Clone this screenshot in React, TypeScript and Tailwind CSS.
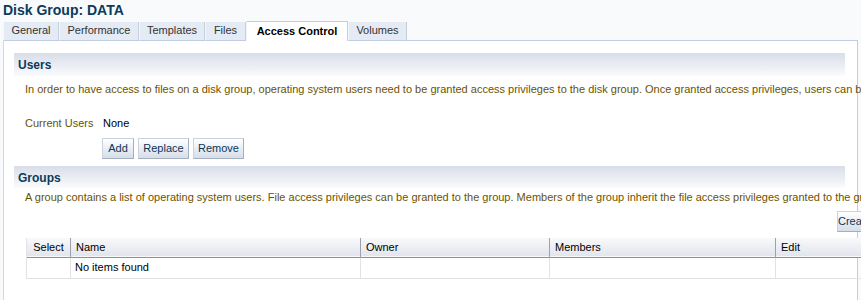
import React from 'react';

const tabs = [
    { name: 'General', w: 'w-[56px]' },
    { name: 'Performance', w: 'w-[80px]' },
    { name: 'Templates', w: 'w-[66px]' },
    { name: 'Files', w: 'w-[41px]' },
    { name: 'Access Control', w: 'w-[102px]', active: true },
    { name: 'Volumes', w: 'w-[59px]' },
];

const columns = [
    { name: 'Select', w: 'w-[44px]', center: true },
    { name: 'Name', w: 'w-[290px]' },
    { name: 'Owner', w: 'w-[189px]' },
    { name: 'Members', w: 'w-[226px]' },
    { name: 'Edit', w: 'w-[110px]' },
];

function Btn({ label, className = '' }: { label: string; className?: string }) {
    return (
        <button
            className={`h-[21px] px-0 text-center border border-[#a3afbf] border-t-[#c9d2de] border-l-[#c9d2de] bg-gradient-to-b from-white to-[#d6dee9] text-[11px] leading-[19px] text-[#0c3557] ${className}`}
        >
            {label}
        </button>
    );
}

function SectionBar({ title, h }: { title: string; h: string }) {
    return (
        <div className={`${h} w-[831px] bg-gradient-to-b from-[#d8dde8] to-[#fafbfd] pl-[4px] pt-[5px]`}>
            <h2 className="text-[12px] font-bold leading-[15px] text-[#0c3a5a]">{title}</h2>
        </div>
    );
}

export default function App() {
    return (
        <div className="w-[861px] h-[300px] overflow-hidden bg-[#f9fafc] font-['Liberation_Sans',Arial,sans-serif] text-[11px]">
            {/* Title */}
            <h1 className="pl-[3px] pt-[2px] h-[21px] text-[14px] font-bold leading-[17px] text-[#0c3a5a]">
                Disk Group: DATA
            </h1>

            {/* Tabs */}
            <div className="relative z-10 flex items-end ml-[3px] h-[20px] -mb-px">
                {tabs.map((t) => (
                    <div
                        key={t.name}
                        className={`${t.w} shrink-0 text-center border-r border-[#c4cfdd] border-l border-l-[#f3f6fa] leading-[16px] ${
                            t.active
                                ? 'h-[20px] bg-white font-bold text-black pt-[1px] border-t border-t-[#c4cfdd]'
                                : 'h-[19px] bg-[#e4ebf4] text-[#333] border-b border-b-[#c0cde0]'
                        }`}
                    >
                        {t.name}
                    </div>
                ))}
            </div>

            {/* Panel */}
            <div className="ml-[3px] w-[855px] h-[260px] bg-white border-t border-r border-l border-t-[#c0cde0] border-r-[#c4cde0] border-l-[#d3d6e6] pl-[10px] pt-[12px] whitespace-nowrap">
                <SectionBar title="Users" h="h-[23px]" />
                <p className="mt-[6px] pl-[11px] leading-[14px] text-[#6b5200]">
                    In order to have access to files on a disk group, operating system users need to be granted access privileges to the disk group. Once granted access privileges, users can be added to groups.
                </p>
                <div className="mt-[20px] pl-[11px] flex leading-[14px]">
                    <span className="w-[78px] text-[#6b5200]">Current Users</span>
                    <span className="text-black">None</span>
                </div>
                <div className="mt-[8px] pl-[88px] flex gap-[4px]">
                    <Btn label="Add" className="w-[32px]" />
                    <Btn label="Replace" className="w-[51px]" />
                    <Btn label="Remove" className="w-[51px]" />
                </div>

                <div className="mt-[7px]">
                    <SectionBar title="Groups" h="h-[22px]" />
                </div>
                <p className="mt-[2px] pl-[11px] leading-[14px] text-[#6b5200]">
                    A group contains a list of operating system users. File access privileges can be granted to the group. Members of the group inherit the file access privileges granted to the group.
                </p>
                <div className="mt-[7px] pl-[823px] flex">
                    <Btn label="Create" className="w-[50px] h-[20px] leading-[18px]" />
                </div>

                <table className="mt-[6px] ml-[12px] w-[859px] min-w-[859px] table-fixed border-collapse text-[11px]">
                    <thead>
                        <tr className="h-[19px] bg-gradient-to-b from-[#f8f9fb] to-[#e3e5ed] border-b border-b-[#8e8f9b]">
                            {columns.map((c, i) => (
                                <th
                                    key={c.name}
                                    className={`${c.w} p-0 font-normal text-black leading-[18px] ${c.center ? 'text-center' : 'text-left pl-[5px]'} ${
                                        i > 0 ? 'border-l border-l-[#9fa0ab]' : 'border-l border-l-[#e3e3e6]'
                                    }`}
                                >
                                    {c.name}
                                </th>
                            ))}
                        </tr>
                    </thead>
                    <tbody>
                        <tr className="h-[21px] border-b border-[#e2e2e2]">
                            {columns.map((c, i) => (
                                <td key={c.name} className="p-0 pl-[4px] border-l border-[#e2e2e2] text-black leading-[19px]">
                                    {i === 1 ? 'No items found' : ''}
                                </td>
                            ))}
                        </tr>
                    </tbody>
                </table>
            </div>
        </div>
    );
}
